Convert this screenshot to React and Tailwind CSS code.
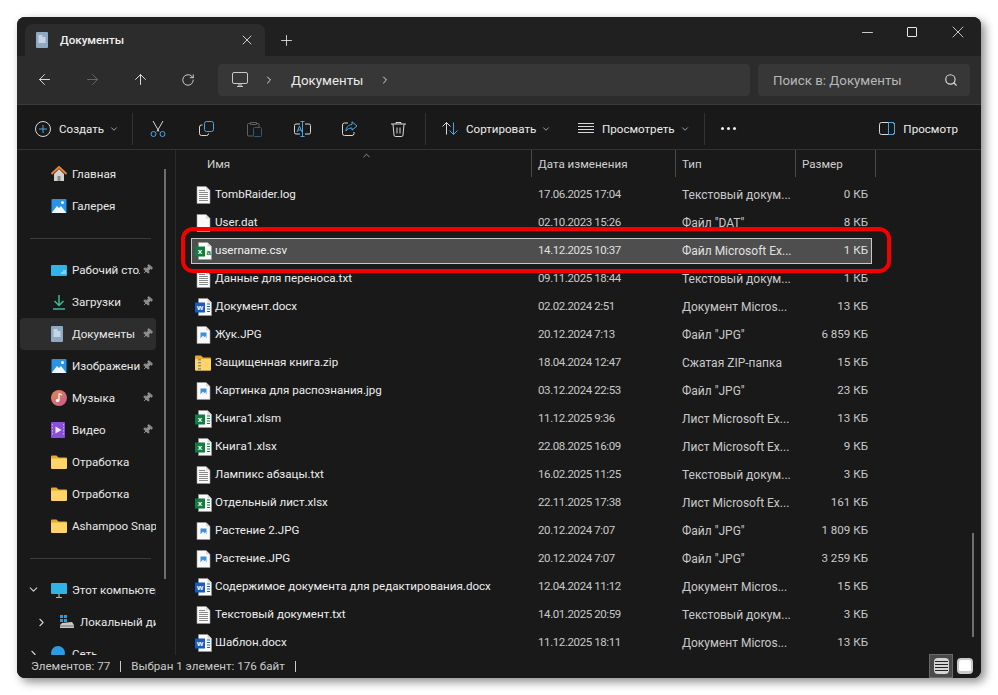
import React from "react";
import { ArrowLeft, ArrowRight, ArrowUp, RotateCw, ChevronRight, ChevronDown, ChevronUp, Plus, X, Minus, Search, Pin } from "lucide-react";

// Иконки файлов
function PageIcon({ children, dx = 0 }) {
  return (
    <svg width="20" height="18" viewBox="0 0 20 18" className="shrink-0">
      <g transform={`translate(${dx} 0)`}>
        <path d="M3.500 .5h9l4 4v13h-13z" fill="#fafafa" stroke="#9a9a9a" strokeWidth=".6" />
        <path d="M12.500 .5v4h4" fill="#d8d8d8" />
      </g>
      {children}
    </svg>
  );
}

function TextFile() {
  return (
    <PageIcon dx={-1.500}>
      <path d="M4 4.500h6M4 6.500h9M4 8.500h9M4 10.500h9M4 12.500h9M4 14.500h9" stroke="#8a8a8a" strokeWidth="1" />
    </PageIcon>
  );
}

function ImageFile() {
  return (
    <PageIcon dx={-1.500}>
      <rect x="5.500" y="6.500" width="6" height="5.500" fill="#3d8fd8" />
      <path d="M5.500 12l2.500-2.500 1.500 1.500 1-1 1 2z" fill="#dff0ff" />
    </PageIcon>
  );
}

function OfficeFile({ color, letter, lines = true }) {
  return (
    <PageIcon>
      {lines && <path d="M12 6h3M12 8.500h3M12 11h3M12 13.500h3" stroke={color} strokeWidth="1.200" />}
      {!lines && <text x="11.500" y="12.500" fontSize="8" fill={color} fontFamily="Liberation Sans, sans-serif" fontWeight="700">a</text>}
      <rect x="0" y="4.500" width="10" height="10" fill={color} />
      <text x="5" y="12" fontSize="8" fill="#fff" textAnchor="middle" fontFamily="Liberation Sans, sans-serif" fontWeight="700">{letter}</text>
    </PageIcon>
  );
}

function ZipFile() {
  return (
    <svg width="20" height="18" viewBox="0 0 20 18" className="shrink-0">
      <path d="M0 2.500a1 1 0 0 1 1-1h5l2 2h7a1 1 0 0 1 1 1v11a1 1 0 0 1-1 1H1a1 1 0 0 1-1-1z" fill="#e6a92f" />
      <rect x="0" y="5" width="16" height="11.500" rx="1" fill="#fcd468" />
      <path d="M3 5h3v1.500H3zM3 8h3v1.500H3zM3 11h3v1.500H3zM3 14h3v1.500H3z" fill="#8f8f8f" />
    </svg>
  );
}

function Folder() {
  return (
    <svg width="16" height="14" viewBox="0 0 16 14">
      <path d="M0 1.500a1 1 0 0 1 1-1h4.500l2 2H15a1 1 0 0 1 1 1V4H0z" fill="#e6a92f" />
      <path d="M0 3.500h16v9.500a1 1 0 0 1-1 1H1a1 1 0 0 1-1-1z" fill="#fcd468" />
    </svg>
  );
}

// Боковая панель
function SideIcon({ kind }) {
  if (kind === "home") {
    return (
      <svg width="16" height="16" viewBox="0 0 16 16">
        <path d="M3 8v7h10V8L8 3z" fill="#d5d2cd" />
        <rect x="6.500" y="10" width="3" height="5" fill="#8b8b8b" />
        <path d="M.5 8L8 1l7.500 7" fill="none" stroke="#e8813a" strokeWidth="2" />
      </svg>
    );
  }
  if (kind === "gallery" || kind === "pictures") {
    return (
      <svg width="16" height="16" viewBox="0 0 16 16">
        <rect width="15" height="14" x=".5" y="1" rx="1" fill="#2a93e6" />
        <path d="M.5 15L6 8l2 2 2-2 5.500 7z" fill="#eef7ff" />
        <circle cx="11.500" cy="4.500" r="1.500" fill="#eef7ff" />
      </svg>
    );
  }
  if (kind === "desktop") {
    return (
      <svg width="16" height="13" viewBox="0 0 16 13">
        <rect width="16" height="11" y="1" rx="1" fill="#2fb3ea" />
        <path d="M10 9h5M12 7h3" stroke="#d5f3ff" strokeWidth="1" />
      </svg>
    );
  }
  if (kind === "downloads") {
    return (
      <svg width="16" height="16" viewBox="0 0 16 16" fill="none" stroke="#35bd98" strokeWidth="1.500">
        <path d="M8 1v10M3.500 7L8 11.500 12.500 7M2 15h12" />
      </svg>
    );
  }
  if (kind === "documents") {
    return (
      <svg width="12" height="16" viewBox="0 0 12 16">
        <rect width="12" height="16" rx="1" fill="#8fa9c4" />
        <path d="M2.500 4h4M2.500 6h7M2.500 8h7M2.500 10h7" stroke="#fff" strokeWidth="1" />
      </svg>
    );
  }
  if (kind === "music") {
    return (
      <svg width="16" height="16" viewBox="0 0 16 16">
        <defs>
          <linearGradient id="mus" x1="0" y1="0" x2="1" y2="1">
            <stop offset="0" stopColor="#e8884f" />
            <stop offset="1" stopColor="#c45a8f" />
          </linearGradient>
        </defs>
        <circle cx="8" cy="8" r="8" fill="url(#mus)" />
        <path d="M8 3.500v7" stroke="#fff" strokeWidth="1.200" />
        <path d="M8 3.500l3 1.500" stroke="#fff" strokeWidth="1.200" />
        <circle cx="6.500" cy="10.500" r="1.700" fill="#fff" />
      </svg>
    );
  }
  if (kind === "video") {
    return (
      <svg width="14" height="16" viewBox="0 0 14 16">
        <rect width="14" height="16" rx="1" fill="#8a4fd8" />
        <path d="M4.500 4.500v7l6-3.500z" fill="#f2e8ff" />
        <path d="M1.500 2v12M12.500 2v12" stroke="#c9a7f5" strokeWidth="1" strokeDasharray="1.500 1.500" />
      </svg>
    );
  }
  if (kind === "pc") {
    return (
      <svg width="16" height="15" viewBox="0 0 16 15">
        <rect width="16" height="11" rx="1" fill="#30b4e8" />
        <path d="M8 11v3M5 14.500h6" stroke="#b8b8b8" strokeWidth="1.200" />
      </svg>
    );
  }
  if (kind === "disk") {
    return (
      <svg width="16" height="16" viewBox="0 0 16 16">
        <path d="M1 1h3v3H1zM5 1h3v3H5zM1 5h3v3H1zM5 5h3v3H5z" fill="#2a9be8" />
        <path d="M3 9l10-1 2 3v3H1v-3z" fill="#c9c9c9" />
        <path d="M1 12h14" stroke="#6e6e6e" strokeWidth="1" />
      </svg>
    );
  }
  if (kind === "net") {
    return (
      <svg width="16" height="16" viewBox="0 0 16 16">
        <circle cx="7" cy="7" r="7" fill="#2d9be0" />
        <rect x="9" y="9" width="7" height="5" fill="#c9c9c9" />
      </svg>
    );
  }
  return <Folder />;
}

function SideItem({ icon, label, pin, selected, indent = "pl-[31px]", textW = "w-[68px]" }) {
  return (
    <div className={`relative flex h-[32px] shrink-0 items-center rounded ${indent} ${selected ? "bg-[#2d2d2d]" : ""}`}>
      <div className="flex w-[21px] shrink-0 justify-start">
        <SideIcon kind={icon} />
      </div>
      <span className={`overflow-hidden whitespace-nowrap leading-[16px] text-[#e8e8e8] ${textW}`}>{label}</span>
      {pin && <Pin size={11} className="absolute left-[122px] top-[10px] rotate-45 fill-[#8e8e8e] text-[#8e8e8e]" />}
    </div>
  );
}

function SideDivider() {
  return (
    <div className="flex h-[32px] items-center pl-[10px]">
      <div className="h-px w-[121px] bg-[#3a3a3a]" />
    </div>
  );
}

function Sidebar() {
  return (
    <div className="relative flex w-[159px] shrink-0 flex-col overflow-hidden border-r border-[#2b2b2b] pl-[3px] pt-[8px]">
      <div className="w-[136px]">
        <SideItem icon="home" label="Главная" />
        <SideItem icon="gallery" label="Галерея" />
        <SideDivider />
        <SideItem icon="desktop" label="Рабочий стол" pin />
        <SideItem icon="downloads" label="Загрузки" pin />
        <SideItem icon="documents" label="Документы" pin selected />
        <SideItem icon="pictures" label="Изображения" pin />
        <SideItem icon="music" label="Музыка" pin />
        <SideItem icon="video" label="Видео" pin />
        <SideItem icon="folder" label="Отработка" textW="w-[84px]" />
        <SideItem icon="folder" label="Отработка" textW="w-[84px]" />
        <SideItem icon="folder" label="Ashampoo Snap" textW="w-[84px]" />
        <SideDivider />
        <div className="relative">
          <ChevronDown size={13} className="absolute left-[7px] top-[9px] text-[#d0d0d0]" />
          <SideItem icon="pc" label="Этот компьютер" textW="w-[84px]" />
        </div>
        <div className="relative">
          <ChevronRight size={13} className="absolute left-[15px] top-[10px] text-[#d0d0d0]" />
          <SideItem icon="disk" label="Локальный диск" indent="pl-[39px]" textW="w-[76px]" />
        </div>
        <div className="relative">
          <ChevronRight size={13} className="absolute left-[7px] top-[10px] text-[#d0d0d0]" />
          <SideItem icon="net" label="Сеть" />
        </div>
      </div>
      <div className="absolute left-[147px] top-[19px] h-[410px] w-[2px] bg-[#6e6e6e]" />
    </div>
  );
}

// Файлы
const files = [
  { name: "TombRaider.log", date: "17.06.2025 17:04", type: "Текстовый докум...", size: "0 КБ", icon: "text" },
  { name: "User.dat", date: "02.10.2023 15:26", type: "Файл \"DAT\"", size: "8 КБ", icon: "blank" },
  { name: "username.csv", date: "14.12.2025 10:37", type: "Файл Microsoft Ex...", size: "1 КБ", icon: "csv", selected: true },
  { name: "Данные для переноса.txt", date: "09.11.2025 18:44", type: "Текстовый докум...", size: "1 КБ", icon: "text" },
  { name: "Документ.docx", date: "02.02.2024 2:51", type: "Документ Micros...", size: "13 КБ", icon: "word" },
  { name: "Жук.JPG", date: "20.12.2024 7:13", type: "Файл \"JPG\"", size: "6 859 КБ", icon: "image" },
  { name: "Защищенная книга.zip", date: "18.04.2024 12:47", type: "Сжатая ZIP-папка", size: "15 КБ", icon: "zip" },
  { name: "Картинка для распознания.jpg", date: "03.12.2024 22:53", type: "Файл \"JPG\"", size: "23 КБ", icon: "image" },
  { name: "Книга1.xlsm", date: "11.12.2025 9:36", type: "Лист Microsoft Ex...", size: "13 КБ", icon: "excel" },
  { name: "Книга1.xlsx", date: "22.08.2025 16:09", type: "Лист Microsoft Ex...", size: "9 КБ", icon: "excel" },
  { name: "Лампикс абзацы.txt", date: "16.02.2025 11:25", type: "Текстовый докум...", size: "3 КБ", icon: "text" },
  { name: "Отдельный лист.xlsx", date: "22.11.2025 17:38", type: "Лист Microsoft Ex...", size: "161 КБ", icon: "excel" },
  { name: "Растение 2.JPG", date: "20.12.2024 7:07", type: "Файл \"JPG\"", size: "1 809 КБ", icon: "image" },
  { name: "Растение.JPG", date: "20.12.2024 7:07", type: "Файл \"JPG\"", size: "3 259 КБ", icon: "image" },
  { name: "Содержимое документа для редактирования.docx", date: "12.04.2024 11:12", type: "Документ Micros...", size: "15 КБ", icon: "word" },
  { name: "Текстовый документ.txt", date: "14.01.2025 20:59", type: "Текстовый докум...", size: "3 КБ", icon: "text" },
  { name: "Шаблон.docx", date: "11.12.2025 18:11", type: "Документ Micros...", size: "13 КБ", icon: "word" },
];

function FileIcon({ kind }) {
  if (kind === "text") return <TextFile />;
  if (kind === "blank") return <PageIcon dx={-1.500} />;
  if (kind === "csv") return <OfficeFile color="#107c41" letter="x" lines={false} />;
  if (kind === "excel") return <OfficeFile color="#107c41" letter="x" />;
  if (kind === "word") return <OfficeFile color="#185abd" letter="w" />;
  if (kind === "image") return <ImageFile />;
  return <ZipFile />;
}

function FileRow({ file }) {
  return (
    <div className="grid h-[28px] grid-cols-[340px_144px_120px_77px] items-center">
      <div className="flex items-center pl-[4px]">
        <FileIcon kind={file.icon} />
        <span className="whitespace-nowrap text-[#ececec]">{file.name}</span>
      </div>
      <span className="whitespace-nowrap pl-[7px] text-[11.5px] tracking-[-0.4px] text-[#c9c9c9]">{file.date}</span>
      <span className="whitespace-nowrap pl-[7px] text-[12px] text-[#c9c9c9]">{file.type}</span>
      <span className="whitespace-nowrap pr-[4px] text-right text-[#c9c9c9]">{file.size}</span>
    </div>
  );
}

function HeaderCell({ label, width, pad = "pl-[6px]" }) {
  return (
    <div className={`flex h-[27px] shrink-0 items-center border-r border-[#4a4a4a] pt-[2px] text-[#cfcfcf] ${pad} ${width}`}>
      {label}
    </div>
  );
}

function ToolDivider() {
  return <div className="h-[32px] w-px shrink-0 bg-[#333333]" />;
}

// Кнопки панели команд
function Cut() {
  return (
    <svg width="16" height="17" viewBox="0 0 16 17" fill="none" strokeWidth="1">
      <path d="M3 1l6 10.500M13 1L7 11.500" stroke="#d8d8d8" />
      <circle cx="3.500" cy="14" r="2.500" stroke="#4ba7e3" />
      <circle cx="12.500" cy="14" r="2.500" stroke="#4ba7e3" />
    </svg>
  );
}

function Copy() {
  return (
    <svg width="15" height="15" viewBox="0 0 15 15" fill="none" strokeWidth="1">
      <path d="M3.500 4h-1a2 2 0 0 0-2 2v6.500a2 2 0 0 0 2 2h5a2 2 0 0 0 2-2" stroke="#d8d8d8" />
      <rect x="5.500" y=".5" width="9" height="10" rx="2" stroke="#4ba7e3" />
    </svg>
  );
}

function Paste() {
  return (
    <svg width="15" height="16" viewBox="0 0 15 16" fill="none" strokeWidth="1" opacity=".45">
      <path d="M3.500 2.500h-2a1 1 0 0 0-1 1V14a1 1 0 0 0 1 1H6M3.500 1.500h6v2h-6zM9.500 2.500h1.500a1 1 0 0 1 1 1V6" stroke="#b8b8b8" />
      <rect x="6.500" y="6.500" width="8" height="9" rx="1" stroke="#4ba7e3" />
    </svg>
  );
}

function Rename() {
  return (
    <svg width="17" height="16" viewBox="0 0 17 16" fill="none" strokeWidth="1">
      <path d="M6 3H2a1.500 1.500 0 0 0-1.500 1.500v7A1.500 1.500 0 0 0 2 13h4M11 3h4a1.500 1.500 0 0 1 1.500 1.500v7A1.500 1.500 0 0 1 15 13h-4" stroke="#d8d8d8" />
      <path d="M8.500 .5v15M6.500 .5h4M6.500 15.500h4" stroke="#4ba7e3" />
      <path d="M3 11l2.500-6L8 11M4 9h3" stroke="#4ba7e3" />
    </svg>
  );
}

function Share() {
  return (
    <svg width="16" height="15" viewBox="0 0 16 15" fill="none" strokeWidth="1">
      <path d="M6 2H2.500a2 2 0 0 0-2 2v8.500a2 2 0 0 0 2 2H10a2 2 0 0 0 2-2V11" stroke="#d8d8d8" />
      <path d="M10 .8l5 4.200-5 4.200V7C7 7 5 8 4 10c0-3.500 2-6 6-6.500z" stroke="#4ba7e3" />
    </svg>
  );
}

function Trash() {
  return (
    <svg width="15" height="16" viewBox="0 0 15 16" fill="none" stroke="#d8d8d8" strokeWidth="1">
      <path d="M0 3h15M5 3V1.500h5V3M2 3l1 11a1.500 1.500 0 0 0 1.500 1.500h6A1.500 1.500 0 0 0 12 14l1-11M6 6.500v6M9 6.500v6" />
    </svg>
  );
}

function Lines() {
  return (
    <svg width="16" height="11" viewBox="0 0 16 11" stroke="#d8d8d8" strokeWidth="1" className="shrink-0">
      <path d="M0 .5h16M0 3.500h16M0 6.500h16M0 9.500h16" />
    </svg>
  );
}

function SortIcon() {
  return (
    <svg width="16" height="13" viewBox="0 0 16 13" fill="none" strokeWidth="1" className="shrink-0">
      <path d="M4.500 12.500V.5M.5 4.500l4-4 4 4" stroke="#d8d8d8" />
      <path d="M11.500 .5v12M7.500 8.500l4 4 4-4" stroke="#4ba7e3" />
    </svg>
  );
}

function IconSlot({ children }) {
  return <div className="flex w-[48px] shrink-0 items-center justify-center">{children}</div>;
}

export default function App() {
  return (
    <div className="h-[695px] w-[998px] overflow-hidden bg-white pl-[17px] pt-[17px] font-['Roboto','Noto_Sans',sans-serif] text-[11.6px] leading-none">
      <div className="relative flex h-[661px] w-[964px] flex-col overflow-hidden rounded-lg bg-[#191919] shadow-[4px_4px_10px_rgba(0,0,0,0.45)]">
        {/* Вкладки */}
        <div className="flex h-[39px] shrink-0 items-end bg-[#202020] pl-[8px]">
          <div className="flex h-[32px] w-[240px] items-center rounded-t-lg bg-[#2c2c2c] pl-[11px] pr-[10px]">
            <SideIcon kind="documents" />
            <span className="ml-[12px] flex-1 pt-[2px] font-medium text-[#f0f0f0]">Документы</span>
            <X size={16} strokeWidth={1.3} className="text-[#e8e8e8]" />
          </div>
          <div className="ml-[13px] flex h-[32px] items-center">
            <Plus size={17} strokeWidth={1.2} className="text-[#e8e8e8]" />
          </div>
          <div className="ml-auto flex h-[39px] items-center gap-[31px] pb-[9px] pr-[13px] text-[#e8e8e8]">
            <Minus size={17} strokeWidth={1.2} />
            <div className="h-[10px] w-[10px] rounded-[1px] border border-[#e8e8e8]" />
            <X size={20} strokeWidth={1} />
          </div>
        </div>

        {/* Адресная строка */}
        <div className="flex h-[49px] shrink-0 items-center border-b border-[#3b3b3b] bg-[#2c2c2c] pb-px">
          <div className="flex w-[201px] shrink-0 items-center pl-[3px]">
            <IconSlot><ArrowLeft size={17} strokeWidth={1.3} className="text-[#e8e8e8]" /></IconSlot>
            <IconSlot><ArrowRight size={17} strokeWidth={1.3} className="text-[#6b6b6b]" /></IconSlot>
            <IconSlot><ArrowUp size={17} strokeWidth={1.3} className="text-[#e8e8e8]" /></IconSlot>
            <IconSlot><RotateCw size={14} strokeWidth={1.4} className="text-[#e8e8e8]" /></IconSlot>
          </div>
          <div className="flex h-[32px] w-[532px] shrink-0 items-center rounded bg-[#373737] pl-[14px] text-[13.300px] text-[#ececec]">
            <svg width="16" height="15" viewBox="0 0 16 15" fill="none" stroke="#c9c9c9" strokeWidth="1" className="shrink-0">
              <rect x=".5" y=".5" width="15" height="11" rx="1.500" />
              <path d="M5 14.500h6M7 12v2M9 12v2" />
            </svg>
            <ChevronRight size={12} className="ml-[15px] text-[#dcdcdc]" />
            <span className="ml-[16px] pt-[2px]">Документы</span>
            <ChevronRight size={12} className="ml-[16px] text-[#dcdcdc]" />
          </div>
          <div className="ml-[8px] flex h-[32px] w-[212px] shrink-0 items-center justify-between rounded bg-[#373737] pl-[15px] pr-[12px] text-[13.300px] text-[#b8b8b8]">
            <span className="pt-[2px]">Поиск в: Документы</span>
            <Search size={14} className="text-[#d8d8d8]" />
          </div>
        </div>

        {/* Панель команд */}
        <div className="flex h-[45px] shrink-0 items-center border-b border-[#333333] pl-[18px] pr-[23px] pt-[3px] text-[#ececec]">
          <div className="flex w-[97px] shrink-0 items-center">
            <svg width="16" height="16" viewBox="0 0 16 16" fill="none" strokeWidth="1">
              <circle cx="8" cy="8" r="7.500" stroke="#d8d8d8" />
              <path d="M8 4v8M4 8h8" stroke="#4ba7e3" />
            </svg>
            <span className="ml-[8px] pt-[2px]">Создать</span>
            <ChevronDown size={10} className="ml-[5px] text-[#bdbdbd]" />
          </div>
          <ToolDivider />
          <div className="ml-px flex items-center">
            <IconSlot><Cut /></IconSlot>
            <IconSlot><Copy /></IconSlot>
            <IconSlot><Paste /></IconSlot>
            <IconSlot><Rename /></IconSlot>
            <IconSlot><Share /></IconSlot>
            <IconSlot><Trash /></IconSlot>
          </div>
          <div className="ml-[3px]"><ToolDivider /></div>
          <div className="ml-[16px] flex w-[136px] shrink-0 items-center">
            <SortIcon />
            <span className="ml-[8px] pt-[2px]">Сортировать</span>
            <ChevronDown size={10} className="ml-[5px] text-[#bdbdbd]" />
          </div>
          <div className="flex w-[126px] shrink-0 items-center">
            <Lines />
            <span className="ml-[8px] pt-[2px]">Просмотреть</span>
            <ChevronDown size={10} className="ml-[5px] text-[#bdbdbd]" />
          </div>
          <ToolDivider />
          <div className="ml-[16px] flex gap-[3px]">
            <div className="h-[3px] w-[3px] rounded-full bg-[#ececec]" />
            <div className="h-[3px] w-[3px] rounded-full bg-[#ececec]" />
            <div className="h-[3px] w-[3px] rounded-full bg-[#ececec]" />
          </div>
          <div className="ml-auto flex items-center">
            <svg width="16" height="13" viewBox="0 0 16 13" fill="none" strokeWidth="1">
              <rect x=".5" y=".5" width="15" height="12" rx="2" stroke="#d8d8d8" />
              <path d="M9.500 .5h4a2 2 0 0 1 2 2v8a2 2 0 0 1-2 2h-4z" stroke="#4ba7e3" />
            </svg>
            <span className="ml-[8px] pt-[2px]">Просмотр</span>
          </div>
        </div>

        {/* Содержимое */}
        <div className="flex min-h-0 flex-1">
          <Sidebar />
          <div className="relative min-w-0 flex-1 overflow-hidden">
            <div className="flex h-[27px] pl-[15px]">
              <HeaderCell label="Имя" width="w-[341px]" pad="pl-[16px]" />
              <HeaderCell label="Дата изменения" width="w-[144px]" />
              <HeaderCell label="Тип" width="w-[120px]" />
              <HeaderCell label="Размер" width="w-[80px]" />
            </div>
            <ChevronUp size={11} className="absolute left-[185px] top-0 text-[#9a9a9a]" />
            <div className="pl-[15px] pt-[4px]">
              {files.map((file) => (
                <FileRow key={file.name} file={file} />
              ))}
            </div>
            <div className="absolute right-[7px] top-[383px] h-[104px] w-[2px] bg-[#6e6e6e]" />
          </div>
        </div>

        {/* Строка состояния */}
        <div className="absolute bottom-0 left-0 right-0 flex h-[23px] items-center bg-[#191919] pl-[14px] text-[#c9c9c9]">
          <span>Элементов: 77</span>
          <div className="mx-[10px] h-[11px] w-px bg-[#c9c9c9]" />
          <span>Выбран 1 элемент: 176 байт</span>
          <div className="mx-[10px] h-[11px] w-px bg-[#c9c9c9]" />
          <div className="absolute bottom-0 right-[8px] flex items-center gap-[4px]">
            <div className="flex h-[24px] w-[24px] items-center justify-center border border-[#6a6a6a] bg-[#4a4a4a]">
              <div className="flex h-[16px] w-[15px] flex-col justify-center gap-[2px] rounded-sm bg-[#d5d5d5] px-[1px]">
                <div className="h-px bg-[#222222]" />
                <div className="h-px bg-[#222222]" />
                <div className="h-px bg-[#222222]" />
                <div className="h-px bg-[#222222]" />
              </div>
            </div>
            <div className="flex h-[16px] w-[16px] flex-col rounded-sm border-2 border-b-[3px] border-[#c9c9c9] bg-white" />
          </div>
        </div>

        {/* Выделенная строка: поверх списка */}
        <div className="absolute left-[174px] top-[221px] flex h-[26px] w-[681px] items-center border border-[#c8c8c8] bg-[#4e4e4e] pl-[3px]">
          <FileIcon kind="csv" />
          <span className="text-[#f2f2f2]">username.csv</span>
          <span className="absolute left-[346px] text-[11.5px] tracking-[-0.4px] text-[#e0e0e0]">14.12.2025 10:37</span>
          <span className="absolute left-[490px] text-[12px] text-[#e0e0e0]">Файл Microsoft Ex...</span>
          <span className="absolute right-[3px] text-[#e0e0e0]">1 КБ</span>
        </div>
        <div className="pointer-events-none absolute left-[164px] top-[210px] h-[46px] w-[710px] rounded-[12px] border-[4px] border-[#f50000]" />
      </div>
    </div>
  );
}
